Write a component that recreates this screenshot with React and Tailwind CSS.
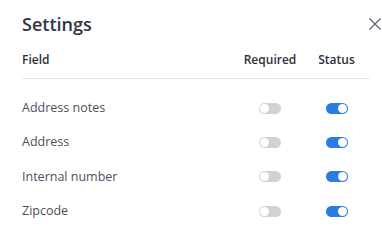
import React from "react";

const rows = ["Address notes", "Address", "Internal number", "Zipcode"];

function Toggle({ on }) {
  return (
    <div
      className={`flex h-[11px] w-[22px] items-center rounded-full px-[1px] ${
        on ? "justify-end bg-[#2b7be4]" : "justify-start bg-[#d2d2d2]"
      }`}
    >
      <div className="h-[9px] w-[9px] rounded-full bg-white" />
    </div>
  );
}

export default function App() {
  return (
    <div
      className="h-[245px] w-[382px] overflow-hidden bg-white pl-[22px] pr-[12px] pt-[10px]"
      style={{ fontFamily: '"Open Sans", sans-serif' }}
    >
      <div className="flex h-[28px] items-center justify-between">
        <div className="text-[18px] font-semibold leading-none text-[#2f3542]">Settings</div>
        <svg
          className="-mr-[11px]"
          width="12"
          height="12"
          viewBox="0 0 12 12"
          fill="none"
          stroke="#5a6270"
          strokeWidth="1.2"
        >
          <path d="M0.5 0.5 L11.5 11.5 M11.5 0.5 L0.5 11.5" />
        </svg>
      </div>
      <div className="mt-[12px] grid h-[29px] grid-cols-[1fr_66px_67px] items-start border-b border-[#e8e8ec] pb-[8px] text-[12px] font-semibold leading-[20px] text-[#2d3039]">
        <div>Field</div>
        <div className="text-center">Required</div>
        <div className="text-center">Status</div>
      </div>
      <div className="pt-[12.5px]">
        {rows.map((r) => (
          <div
            key={r}
            className="grid h-[34.2px] grid-cols-[1fr_66px_67px] items-center text-[12.5px] text-[#4b505c]"
          >
            <div>{r}</div>
            <div className="flex justify-center">
              <Toggle on={false} />
            </div>
            <div className="flex justify-center">
              <Toggle on={true} />
            </div>
          </div>
        ))}
      </div>
    </div>
  );
}
